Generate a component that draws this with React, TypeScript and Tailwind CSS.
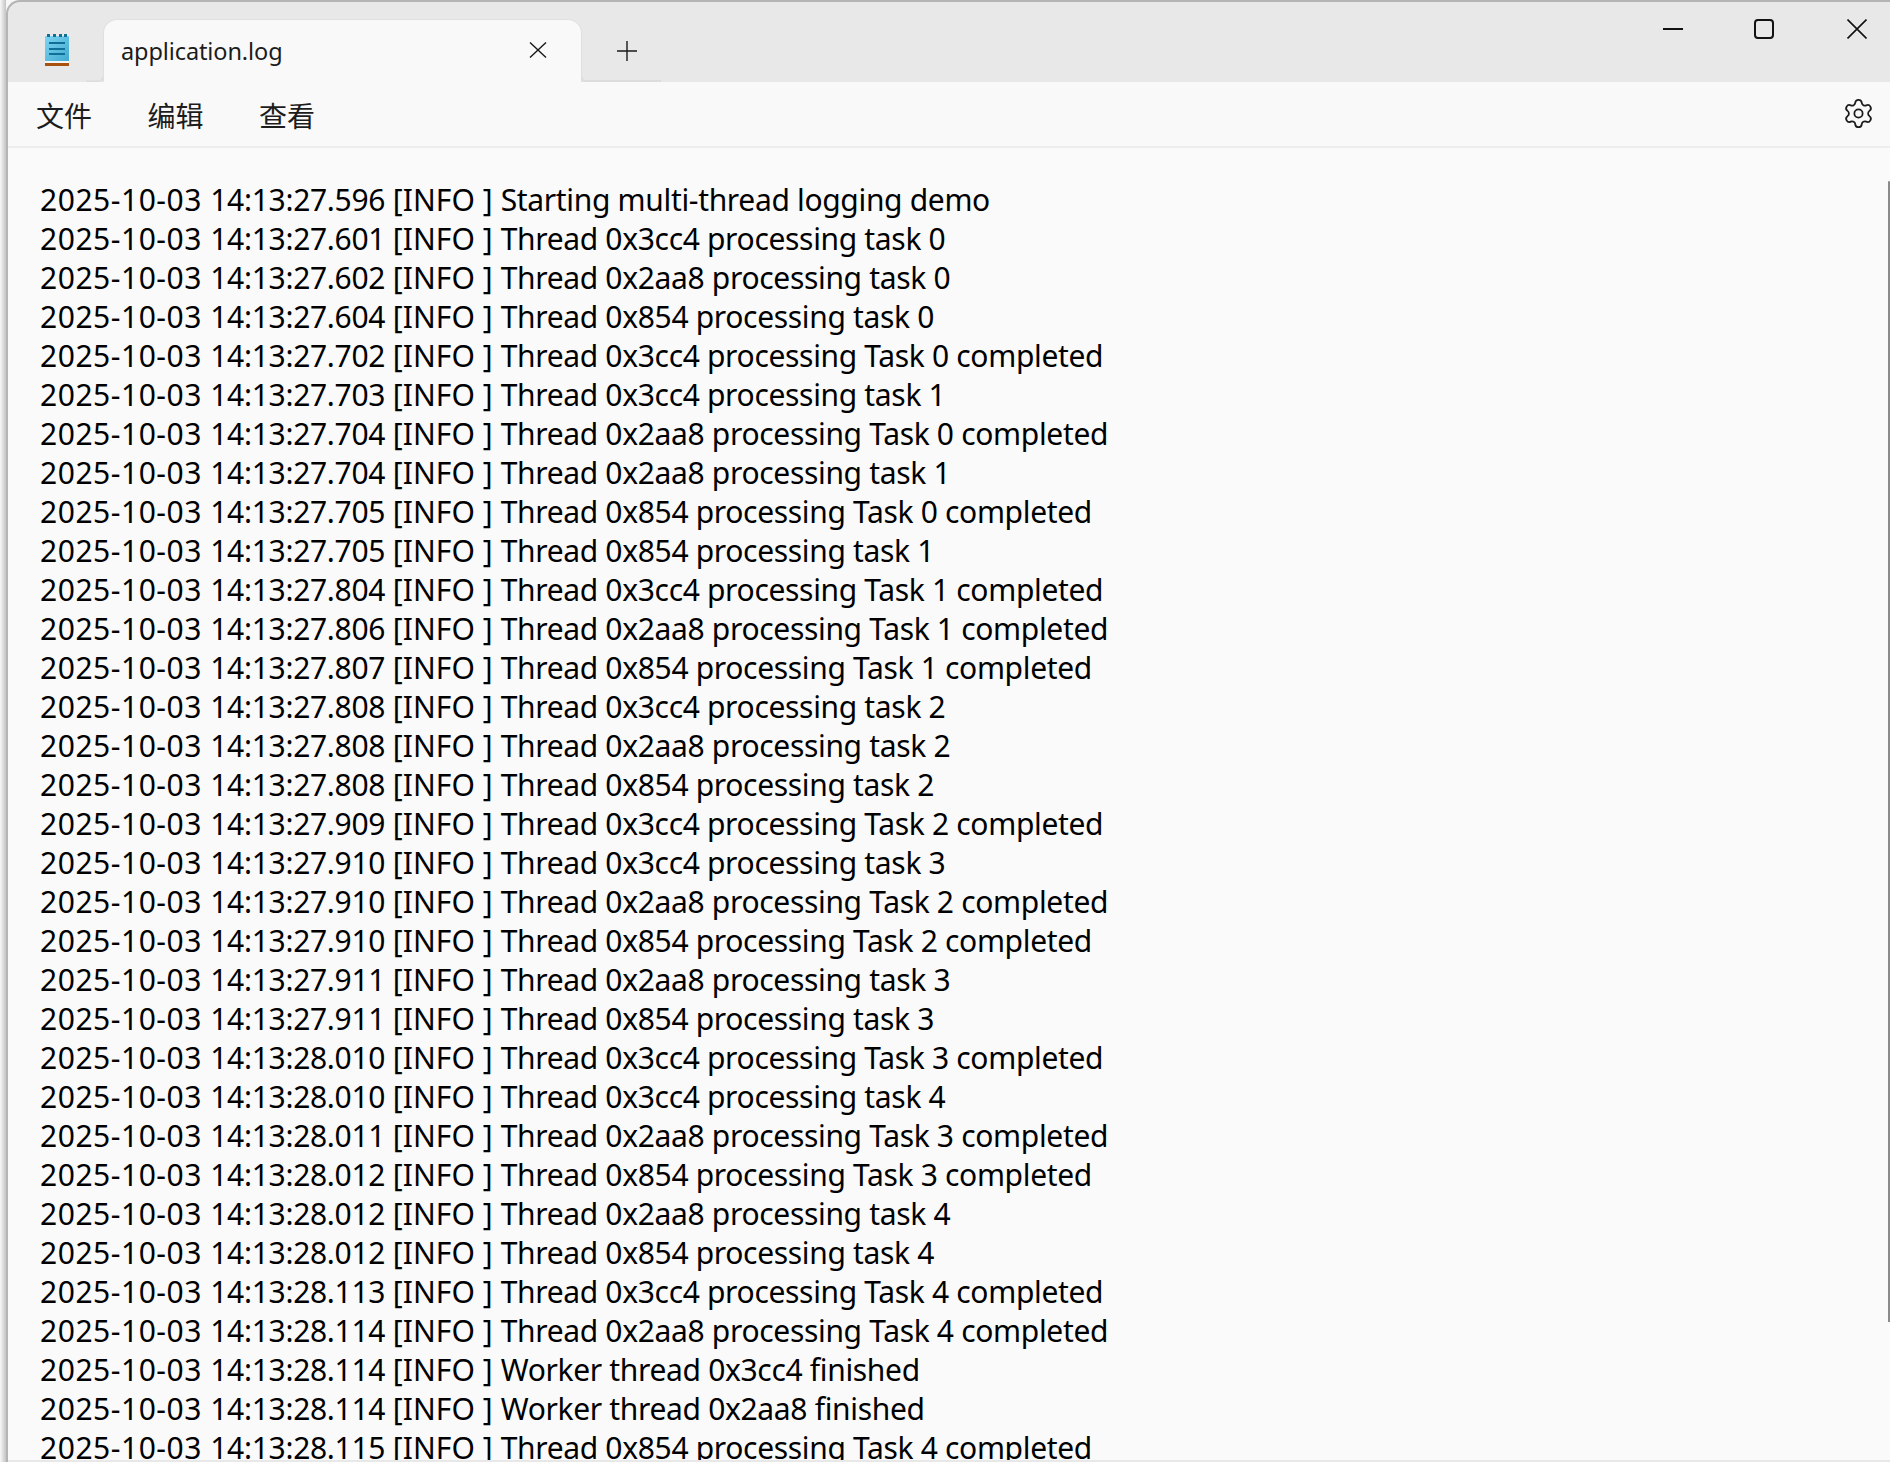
import { Settings } from "lucide-react";

const L: [string, string][] = [
  ["27.596", "Starting multi-thread logging demo"],
  ["27.601", "Thread 0x3cc4 processing task 0"],
  ["27.602", "Thread 0x2aa8 processing task 0"],
  ["27.604", "Thread 0x854 processing task 0"],
  ["27.702", "Thread 0x3cc4 processing Task 0 completed"],
  ["27.703", "Thread 0x3cc4 processing task 1"],
  ["27.704", "Thread 0x2aa8 processing Task 0 completed"],
  ["27.704", "Thread 0x2aa8 processing task 1"],
  ["27.705", "Thread 0x854 processing Task 0 completed"],
  ["27.705", "Thread 0x854 processing task 1"],
  ["27.804", "Thread 0x3cc4 processing Task 1 completed"],
  ["27.806", "Thread 0x2aa8 processing Task 1 completed"],
  ["27.807", "Thread 0x854 processing Task 1 completed"],
  ["27.808", "Thread 0x3cc4 processing task 2"],
  ["27.808", "Thread 0x2aa8 processing task 2"],
  ["27.808", "Thread 0x854 processing task 2"],
  ["27.909", "Thread 0x3cc4 processing Task 2 completed"],
  ["27.910", "Thread 0x3cc4 processing task 3"],
  ["27.910", "Thread 0x2aa8 processing Task 2 completed"],
  ["27.910", "Thread 0x854 processing Task 2 completed"],
  ["27.911", "Thread 0x2aa8 processing task 3"],
  ["27.911", "Thread 0x854 processing task 3"],
  ["28.010", "Thread 0x3cc4 processing Task 3 completed"],
  ["28.010", "Thread 0x3cc4 processing task 4"],
  ["28.011", "Thread 0x2aa8 processing Task 3 completed"],
  ["28.012", "Thread 0x854 processing Task 3 completed"],
  ["28.012", "Thread 0x2aa8 processing task 4"],
  ["28.012", "Thread 0x854 processing task 4"],
  ["28.113", "Thread 0x3cc4 processing Task 4 completed"],
  ["28.114", "Thread 0x2aa8 processing Task 4 completed"],
  ["28.114", "Worker thread 0x3cc4 finished"],
  ["28.114", "Worker thread 0x2aa8 finished"],
  ["28.115", "Thread 0x854 processing Task 4 completed"],
];

function NotepadIcon() {
  return (
    <svg width="24" height="32" viewBox="0 0 24 32">
      <defs>
        <linearGradient id="np" x1="0" y1="0" x2="1" y2="1">
          <stop offset="0" stopColor="#7dd3f0" />
          <stop offset="1" stopColor="#3fa9cf" />
        </linearGradient>
      </defs>
      <rect width="24" height="3" y="2" fill="#7dd3f0" />
      <rect x="2" y="0" width="3" height="5" fill="#0f6f96" />
      <rect x="8" y="0" width="3" height="5" fill="#0f6f96" />
      <rect x="14" y="0" width="3" height="5" fill="#0f6f96" />
      <rect x="19" y="0" width="3" height="5" fill="#0f6f96" />
      <rect x="0" y="3" width="24" height="25" fill="url(#np)" />
      <rect x="4" y="8" width="16" height="2" fill="#0f6f96" />
      <rect x="4" y="14" width="16" height="2" fill="#0f6f96" />
      <rect x="4" y="19" width="16" height="2" fill="#0f6f96" />
      <rect x="0" y="27" width="24" height="2" fill="#f4f4f4" />
      <rect x="0" y="29" width="24" height="3" fill="#a9520f" />
    </svg>
  );
}

export default function App() {
  return (
    <div className="w-[1890px] h-[1462px] overflow-hidden bg-[#f7f7f7] flex" style={{ fontFamily: '"Noto Sans", "Noto Sans CJK SC", sans-serif' }}>
      <div className="w-[6px] shrink-0 bg-gradient-to-r from-[#f8f8f8] to-[#c4c4c4]" />
      <div className="flex-1 flex flex-col min-w-0 overflow-hidden bg-[#e8e8e8] border-t-2 border-l-2 border-[#b4b4b4] rounded-tl-[14px]">
        <div className="h-[80px] shrink-0 flex items-end relative">
          <div className="w-[95px] h-full flex items-start pl-[37px] pt-[32px] shrink-0 relative">
            <NotepadIcon />
            <svg width="18" height="5" viewBox="0 0 18 5" className="absolute right-[-1px] bottom-0" fill="none" stroke="#dcdcdc" strokeWidth="1.5">
              <path d="M0 4.2h12c3 0 4.5-1.5 5-4" />
            </svg>
          </div>
          <div className="w-[479px] h-[63px] bg-[#f9f9f9] rounded-t-[14px] border-[1.5px] border-b-0 border-[#e0e0e0] flex items-center justify-between pl-[17px] pr-[34px] shrink-0 relative z-10">
            <span className="text-[23.5px] text-[#1c1c1c] leading-none tracking-[-0.1px] relative top-[1px]">application.log</span>
            <svg width="18" height="16" viewBox="0 0 18 16" className="relative -top-[1px]" stroke="#1a1a1a" strokeWidth="1.4" fill="none">
              <path d="M1 0.5l16 15M17 0.5L1 15.5" />
            </svg>
          </div>
          <div className="w-[79px] h-[2px] bg-[#dcdcdc] shrink-0 relative rounded-bl">
            <svg width="20" height="20" viewBox="0 0 20 20" className="absolute left-[35px] -top-[39px]" stroke="#1a1a1a" strokeWidth="1.4" fill="none">
              <path d="M10 0v20M0 10h20" />
            </svg>
            <svg width="6" height="6" viewBox="0 0 6 6" className="absolute -left-[1px] bottom-0" fill="none" stroke="#dcdcdc" strokeWidth="1.5">
              <path d="M0.7 0c0 3 1.5 5.2 5.3 5.2" />
            </svg>
          </div>
          <div className="flex-1" />
          <div className="absolute right-[23px] top-[17px] flex items-start">
            <svg width="20" height="20" viewBox="0 0 20 20" className="mr-[71px]" stroke="#111" strokeWidth="2" fill="none">
              <path d="M0 10h20" />
            </svg>
            <svg width="20" height="20" viewBox="0 0 20 20" className="mr-[73px]" stroke="#111" strokeWidth="2" fill="none">
              <rect x="1" y="1" width="18" height="18" rx="3" />
            </svg>
            <svg width="20" height="20" viewBox="0 0 20 20" stroke="#111" strokeWidth="1.6" fill="none">
              <path d="M0.5 0.5l19 19M19.5 0.5l-19 19" />
            </svg>
          </div>
        </div>
        <div className="h-[66px] shrink-0 bg-[#f9f9f9] border-b-2 border-[#ededed] flex items-center justify-between pr-[15px]">
          <div className="flex pl-[28px] gap-[55.5px] text-[28px] text-[#1c1c1c] leading-none relative top-[2px]">
            <span>文件</span>
            <span>编辑</span>
            <span>查看</span>
          </div>
          <Settings size={33} strokeWidth={1.3} color="#1c1c1c" className="relative -top-[1px]" />
        </div>
        <div className="flex-1 min-h-0 bg-[#fafafa] pl-[32px] pt-[32px] overflow-hidden relative mb-[2px]">
          {L.map(([t, m], i) => (
            <div key={i} className="h-[39px] leading-[39px] text-[30px] text-black whitespace-pre">
              <span className="tracking-[0.53px]">{"2025-10-03 "}</span>
              <span className="tracking-[-0.3px]">{`14:13:${t} `}</span>
              <span className="tracking-[0.08px]">{"[INFO ] "}</span>
              <span className="tracking-[-0.33px]">{m}</span>
            </div>
          ))}
          <div className="absolute right-0 top-[33px] h-[1141px] w-[2px] bg-[#8a8a8a] rounded-t" />
        </div>
      </div>
    </div>
  );
}
